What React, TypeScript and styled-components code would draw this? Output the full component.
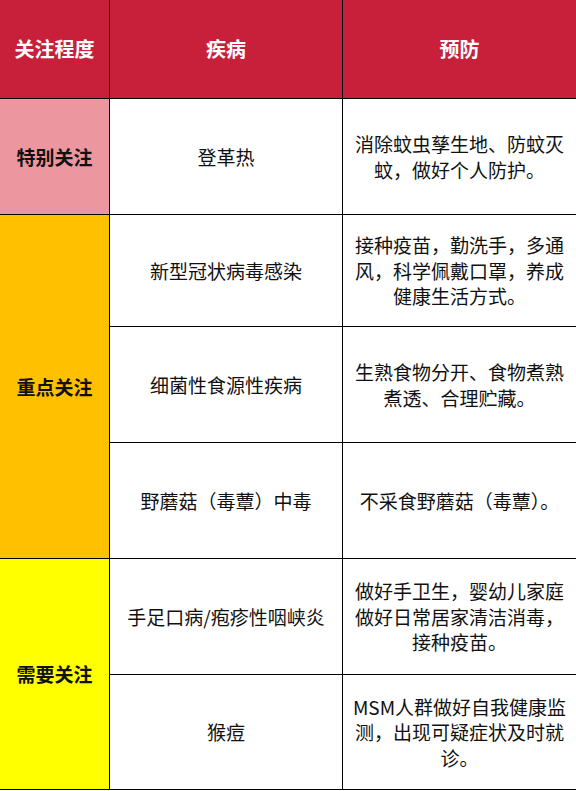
import React from 'react'
import styled, { createGlobalStyle } from 'styled-components'

const GlobalStyle = createGlobalStyle`
  html, body {
    margin: 0;
    padding: 0;
    background: #fff;
  }
  body {
    font-family: "Microsoft YaHei", "Noto Sans CJK SC", "Noto Sans", sans-serif;
  }
`

const Grid = styled.div`
  display: grid;
  grid-template-columns: 109px 232px 1fr;
  grid-template-rows: 98px 115px 111px 115px 115px 115px 114px;
  gap: 1px;
  padding-bottom: 1px;
  background: #000;
  width: 576px;
`

const Cell = styled.div<{ $bg?: string; $span?: number }>`
  display: flex;
  align-items: center;
  justify-content: center;
  text-align: center;
  background: ${(p) => p.$bg || '#fff'};
  grid-row: ${(p) => (p.$span ? `span ${p.$span}` : 'auto')};
  font-size: 19px;
  line-height: 25.5px;
  color: #111;
  padding: 0 6px;
`

const HeadCell = styled(Cell)`
  background: #c8203a;
  color: #fff;
  font-size: 20px;
  font-weight: bold;
`

const Level = styled(Cell)`
  font-weight: bold;
  padding: 0;
`

interface Row {
  disease: string
  prevention: string[]
}

const groups: { level: string; bg: string; rows: Row[] }[] = [
  {
    level: '特别关注',
    bg: '#ec969f',
    rows: [{ disease: '登革热', prevention: ['消除蚊虫孳生地、防蚊灭', '蚊，做好个人防护。'] }],
  },
  {
    level: '重点关注',
    bg: '#ffc000',
    rows: [
      {
        disease: '新型冠状病毒感染',
        prevention: ['接种疫苗，勤洗手，多通', '风，科学佩戴口罩，养成', '健康生活方式。'],
      },
      { disease: '细菌性食源性疾病', prevention: ['生熟食物分开、食物煮熟', '煮透、合理贮藏。'] },
      { disease: '野蘑菇（毒蕈）中毒', prevention: ['不采食野蘑菇（毒蕈）。'] },
    ],
  },
  {
    level: '需要关注',
    bg: '#ffff00',
    rows: [
      {
        disease: '手足口病/疱疹性咽峡炎',
        prevention: ['做好手卫生，婴幼儿家庭', '做好日常居家清洁消毒，', '接种疫苗。'],
      },
      {
        disease: '猴痘',
        prevention: ['MSM人群做好自我健康监', '测，出现可疑症状及时就', '诊。'],
      },
    ],
  },
]

export default function App() {
  return (
    <>
      <GlobalStyle />
      <Grid>
        <HeadCell>关注程度</HeadCell>
        <HeadCell>疾病</HeadCell>
        <HeadCell>预防</HeadCell>
        {groups.map((g) =>
          g.rows.map((r, i) => (
            <React.Fragment key={r.disease}>
              {i === 0 && (
                <Level $bg={g.bg} $span={g.rows.length}>
                  {g.level}
                </Level>
              )}
              <Cell>{r.disease}</Cell>
              <Cell>
                <div>
                  {r.prevention.map((line) => (
                    <div key={line}>{line}</div>
                  ))}
                </div>
              </Cell>
            </React.Fragment>
          ))
        )}
      </Grid>
    </>
  )
}
